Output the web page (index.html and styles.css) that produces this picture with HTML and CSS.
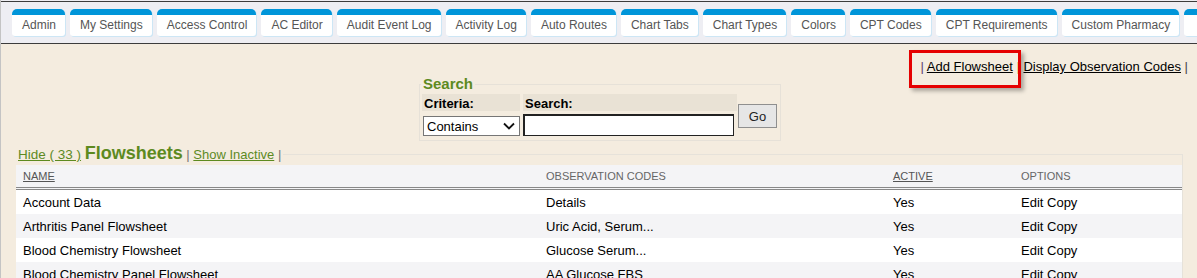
FILE: index.html
```html
<!DOCTYPE html>
<html>
<head>
<meta charset="utf-8">
<link rel="stylesheet" href="styles.css">
</head>
<body>
<div class="page">
  <div class="topbar">
    <div class="tabs">
      <a class="tab">Admin</a>
      <a class="tab">My Settings</a>
      <a class="tab">Access Control</a>
      <a class="tab">AC Editor</a>
      <a class="tab">Audit Event Log</a>
      <a class="tab">Activity Log</a>
      <a class="tab">Auto Routes</a>
      <a class="tab">Chart Tabs</a>
      <a class="tab">Chart Types</a>
      <a class="tab">Colors</a>
      <a class="tab">CPT Codes</a>
      <a class="tab">CPT Requirements</a>
      <a class="tab">Custom Pharmacy</a>
      <a class="tab tab-cut"></a>
    </div>
  </div>
  <div class="content">
    <div class="links">
      <span class="pipe p1">|</span>
      <a class="link highlight">Add Flowsheet</a>
      <span class="pipe p2">|</span>
      <a class="link">Display Observation Codes</a>
      <span class="pipe">|</span>
    </div>
    <fieldset class="search">
      <legend>Search</legend>
      <div class="search-body">
        <table class="search-table">
          <tr>
            <th class="crit">Criteria:</th>
            <th class="term">Search:</th>
          </tr>
          <tr>
            <td>
              <div class="select"><span>Contains</span>
                <svg width="12" height="8" viewBox="0 0 12 8"><path d="M1 1.5 L6 6.5 L11 1.5" fill="none" stroke="#111" stroke-width="1.8"/></svg>
              </div>
            </td>
            <td><div class="input"></div></td>
          </tr>
        </table>
        <button class="go">Go</button>
      </div>
    </fieldset>
    <fieldset class="sheets">
      <legend><a class="glink hide">Hide ( 33 )</a> <span class="title">Flowsheets</span> <span class="gpipe">|</span> <a class="glink">Show Inactive</a> <span class="gpipe">|</span></legend>
      <table class="grid">
        <colgroup>
          <col class="c1"><col class="c2"><col class="c3"><col class="c4">
        </colgroup>
        <thead>
          <tr><th><u>NAME</u></th><th>OBSERVATION CODES</th><th><u>ACTIVE</u></th><th>OPTIONS</th></tr>
        </thead>
        <tbody>
          <tr><td>Account Data</td><td>Details</td><td>Yes</td><td>Edit Copy</td></tr>
          <tr><td>Arthritis Panel Flowsheet</td><td>Uric Acid, Serum...</td><td>Yes</td><td>Edit Copy</td></tr>
          <tr><td>Blood Chemistry Flowsheet</td><td>Glucose Serum...</td><td>Yes</td><td>Edit Copy</td></tr>
          <tr><td>Blood Chemistry Panel Flowsheet</td><td>AA Glucose FBS</td><td>Yes</td><td>Edit Copy</td></tr>
        </tbody>
      </table>
    </fieldset>
  </div>
</div>
</body>
</html>
```

FILE: styles.css
```css
html, body {
  margin: 0;
  padding: 0;
  background: #f4ecdf;
  font-family: "Liberation Sans", Arial, sans-serif;
  font-size: 13px;
  color: #000;
  overflow: hidden;
}

.page {
  border-left: 1px solid #c4c4c4;
  min-height: 278px;
}

.topbar {
  background: #eeeef3;
  padding-top: 1px;
}

.tabs {
  border-top: 1px solid #3c3c3c;
  border-bottom: 1px solid #3c3c3c;
  height: 34px;
  padding: 7px 0 0 11px;
  display: flex;
  gap: 5px;
  white-space: nowrap;
  overflow: hidden;
}

.tab {
  flex: none;
  height: 21px;
  padding: 0 9px 0 10px;
  background: #fff;
  border-top: 6px solid #0095d9;
  border-radius: 5px 5px 3px 3px;
  box-shadow: 1px 1px 0 #cde6f5;
  color: #555;
  font-size: 12px;
  line-height: 21px;
  text-decoration: none;
}

.tab-cut {
  width: 40px;
  padding: 0;
}

.content {
  padding: 15px 9px 0 14px;
}

.links {
  text-align: right;
  line-height: 16px;
  color: #444;
}

.link {
  color: #000;
  text-decoration: underline;
}

.p1 { color: #5c3c6c; }
.p2 { color: #e8a85a; }

.highlight {
  position: relative;
}

.highlight::after {
  content: "";
  position: absolute;
  left: -18px;
  right: -8px;
  top: -9px;
  bottom: -14px;
  border: 3px solid #e50000;
  box-shadow: 3px 3px 4px rgba(0, 0, 0, 0.3);
}

.search {
  width: fit-content;
  margin: 0 0 0 404px;
  border: 1px solid #e6e1d8;
  padding: 0 3px 1px 1px;
}

.search legend {
  padding: 0 2px;
  color: #5d8a1f;
  font-weight: bold;
  font-size: 15px;
  line-height: 18px;
}

.search-body {
  display: flex;
  align-items: center;
}

.search-table {
  border-collapse: separate;
  border-spacing: 3px 1px;
  margin-left: -2px;
}

.search-table th {
  background: #e9e2d5;
  text-align: left;
  font-size: 13px;
  padding: 1px 2px 0;
  height: 16px;
}

.search-table td {
  padding: 0;
  height: 26px;
}

.crit { width: 93px; }
.term { width: 210px; }

.select {
  height: 18px;
  margin: 2px 0 0 1px;
  border: 1px solid #767676;
  background: #fff;
  display: flex;
  align-items: center;
  justify-content: space-between;
  padding: 0 4px 0 3px;
  width: 88px;
}

.input {
  width: 208px;
  height: 19px;
  margin-top: 0;
  border: 1px solid #222;
  border-top-width: 2px;
  border-left-width: 2px;
  background: #fff;
}

.go {
  margin-left: -2px;
  width: 39px;
  height: 24px;
  background: #e6e6e6;
  border: 1px solid #8f8f8f;
  font-family: "Liberation Sans", Arial, sans-serif;
  font-size: 13px;
  color: #222;
  padding: 0;
}

.sheets {
  margin: 2px 5px 0 1px;
  border: 1px solid #e6e2da;
  border-left: 0;
  border-bottom: 0;
  padding: 0;
}

.sheets legend {
  padding: 0 2px;
  line-height: 20px;
  color: #888;
}

.glink {
  color: #5d8a1f;
  text-decoration: underline;
}

.hide {
  font-size: 13.5px;
}

.title {
  color: #5d8a1f;
  font-weight: bold;
  font-size: 18px;
}

.gpipe { color: #777; }

.grid {
  width: 100%;
  border-collapse: collapse;
  table-layout: fixed;
}

.c1 { width: 523px; }
.c2 { width: 347px; }
.c3 { width: 128px; }

.grid thead th {
  background: #f4f4f6;
  color: #666;
  font-weight: normal;
  font-size: 11px;
  text-align: left;
  height: 22px;
  padding: 0 7px;
  border-bottom: 3px double #888;
}

.grid thead th u { color: #555; }

.grid td {
  height: 24px;
  padding: 0 7px;
  background: #fff;
}

.grid tbody tr:nth-child(even) td {
  background: #f4f4f6;
}
```
